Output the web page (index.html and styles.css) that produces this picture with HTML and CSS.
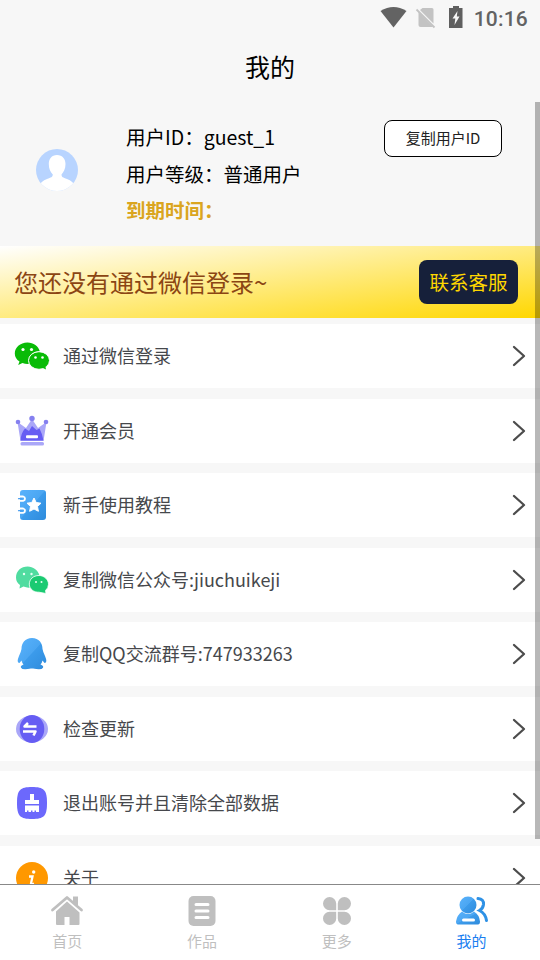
FILE: index.html
```html
<!DOCTYPE html>
<html lang="zh-CN">
<head>
<meta charset="utf-8">
<title>我的</title>
<link rel="stylesheet" href="styles.css">
</head>
<body>
<div class="app">
  <header class="status">
    <svg class="status-icons" width="90" height="28" viewBox="0 0 90 28">
      <path d="M.5 11Q13.500 3 26.500 11L13.500 27.500Z" fill="#636363"/>
      <path d="M42.500 8H52Q53.500 8 53.500 9.500V23.500L40 10Z M38.500 12L53 27H40.500Q38.500 27 38.500 25Z" fill="#c3c3c3"/>
      <path d="M36.500 9.500L54.500 27.500" stroke="#c3c3c3" stroke-width="1.800"/>
      <path d="M73 6H79V8H82.500V28H69V8H73Z" fill="#5f5f5f"/>
      <path d="M77.500 11L72.500 18.500H75.300L74.500 25L79.500 16.500H76.800Z" fill="#f7f7f7"/>
    </svg>
    <span class="clock">10:16</span>
  </header>
  <h1 class="title">我的</h1>
  <main class="content">
    <section class="profile">
      <svg class="avatar" width="42" height="42" viewBox="0 0 42 42">
        <defs><clipPath id="face"><circle cx="21" cy="21" r="21"/></clipPath></defs>
        <g clip-path="url(#face)"><path fill="#b8d4ff" d="M0 0H42V42H0Z"/><path fill="#fff" d="M21 6C26.500 6 29.500 10 29.500 15C29.500 20 27.500 23 25.500 25.500C25.500 28 27 28.500 31 30C35 31.500 38 34 39 37V42H3V37C4 34 7 31.500 11 30C15 28.500 16.800 28 16.800 25.500C14.500 23 12.800 20 12.800 15C12.800 10 15.500 6 21 6Z"/></g>
      </svg>
      <div class="facts">
        <p>用户ID：guest_1</p>
        <p>用户等级：普通用户</p>
        <p class="expiry">到期时间：</p>
      </div>
      <button class="copy">复制用户ID</button>
    </section>
    <section class="banner">
      <span>您还没有通过微信登录~</span>
      <button class="service">联系客服</button>
    </section>
    <nav class="menu">
      <a class="row">
        <svg class="icon" viewBox="0 0 36 36"><path fill="#09bb07" d="M13.500 4.500C6 4.500.8 9.500.8 15.500C.8 19 2.500 21.500 5.500 23.500L4.200 27L8.500 25Q12 26.300 15.500 25.800C13 19 18 13.300 25.800 13.300C24.500 8 19.500 4.500 13.500 4.500Z"/><ellipse cx="25" cy="22.500" rx="10.500" ry="8.800" fill="#09bb07" stroke="#fff" stroke-width="1"/><path fill="#09bb07" d="M27 29L32 31.500L31 27Z"/><g fill="#fff"><circle cx="9" cy="11.500" r="1.600"/><circle cx="17.500" cy="11.500" r="1.600"/><circle cx="21.500" cy="19.500" r="1.300"/><circle cx="28.500" cy="19.500" r="1.300"/></g></svg>
        <span class="label">通过微信登录</span>
        <svg class="arrow" viewBox="0 0 14 22"><path d="M2 2L12 11L2 20"/></svg>
      </a>
      <a class="row">
        <svg class="icon" viewBox="0 0 36 36"><path fill="#aaa7f8" d="M3.500 9L12 15L18 6L24 15L32.500 9L29.500 28H6.500Z"/><g fill="#8580ef"><circle cx="4" cy="9" r="2.300"/><circle cx="18" cy="5.500" r="2.700"/><circle cx="32" cy="9" r="2.300"/></g><path fill="#665df3" d="M11 15.500L15 18L18 13L22.500 17L25.500 15.500Q28 20 29.500 27.500H6.500Q7 20 11 15.500Z"/><rect x="12" y="22.300" width="12" height="3" rx="1" fill="#fff"/><rect x="6.500" y="29" width="23.500" height="3.500" rx="1.500" fill="#aaa7f8"/></svg>
        <span class="label">开通会员</span>
        <svg class="arrow" viewBox="0 0 14 22"><path d="M2 2L12 11L2 20"/></svg>
      </a>
      <a class="row">
        <svg class="icon" viewBox="0 0 36 36"><defs><linearGradient id="blue" x2="1" y2="1"><stop stop-color="#59b2fc"/><stop offset=".48" stop-color="#4ba6f2"/><stop offset=".5" stop-color="#3c9beb"/><stop offset="1" stop-color="#2e8bdc"/></linearGradient></defs><rect x="6" y="3" width="26" height="30" rx="3" fill="url(#blue)"/><g fill="none" stroke-linecap="round"><path stroke="#fff" stroke-width="1.800" d="M6 9.500H9.200Q11 10 11 11.700T9.200 13.800H6M6 21.500H9.200Q11 22 11 23.700T9.200 25.800H6"/><path stroke="#4a9ff0" stroke-width="1.200" d="M4.500 11.700H8M4.500 23.700H8"/></g><path fill="#fff" stroke="#fff" stroke-linejoin="round" d="M20 11L22.200 15.500L27 16.200L23.500 19.500L24.400 24.300L20 22L15.600 24.300L16.500 19.500L13 16.200L17.800 15.500Z"/></svg>
        <span class="label">新手使用教程</span>
        <svg class="arrow" viewBox="0 0 14 22"><path d="M2 2L12 11L2 20"/></svg>
      </a>
      <a class="row">
        <svg class="icon" viewBox="0 0 36 36"><path fill="#50dca0" d="M13.700 4.500C7 4.500 2 9 2 15.500Q2 20 6 23L5.500 26.500L9.500 24.500Q13 26 16 25.500C14 19 18 14 25.500 13.500C24 8 19 4.500 13.700 4.500Z"/><path fill="#1bca72" stroke="#fff" stroke-width=".8" d="M25 13.500C19 13.500 15.300 17.500 15.300 22.200C15.300 27 20 30.500 25 30.200L32 31.500L31.500 28.500Q34.500 26 34.500 22.200C34.500 17.500 30 13.500 25 13.500Z"/><g fill="#e8fff3"><circle cx="10" cy="12" r="1.200"/><circle cx="17.500" cy="12" r="1.200"/><circle cx="22" cy="20" r="1"/><circle cx="27.500" cy="20" r="1"/></g></svg>
        <span class="label">复制微信公众号:jiuchuikeji</span>
        <svg class="arrow" viewBox="0 0 14 22"><path d="M2 2L12 11L2 20"/></svg>
      </a>
      <a class="row">
        <svg class="icon" viewBox="0 0 36 36"><path fill="url(#blue)" d="M18 2C11 2 7.500 7 7.500 13Q7 16 5 20Q2 27 5.500 27L7.500 24.500Q8 27 9.500 28.500Q6 30 7 31.700Q8.500 34.500 17 32.500H19Q27.500 34.500 29 31.700Q30 30 26.500 28.500Q28 27 28.500 24.500L30.500 27Q34 27 31 20Q29 16 28.500 13C28.500 7 25 2 18 2Z"/></svg>
        <span class="label">复制QQ交流群号:747933263</span>
        <svg class="arrow" viewBox="0 0 14 22"><path d="M2 2L12 11L2 20"/></svg>
      </a>
      <a class="row">
        <svg class="icon" viewBox="0 0 36 36"><ellipse cx="18" cy="18" rx="16" ry="13.500" fill="#aaa7f8"/><ellipse cx="18" cy="18" rx="12.300" ry="14" fill="#665df3"/><path fill="none" stroke="#fff" stroke-width="2.500" stroke-linejoin="round" d="M22.500 15.500H10.500L14 12M9 20.500H21.500L19.500 24.500"/></svg>
        <span class="label">检查更新</span>
        <svg class="arrow" viewBox="0 0 14 22"><path d="M2 2L12 11L2 20"/></svg>
      </a>
      <a class="row">
        <svg class="icon" viewBox="0 0 36 36"><path fill="#6c68fc" d="M18 2C30 2 33 5 33 18S30 34 18 34S3 31 3 18S6 2 18 2Z"/><path fill="#fff" d="M16 9H20V15H25V19H11V15H16ZM11 20.500H25V27H22V25.500H20.500V27H18.500V25.500H17V27H14.500V25.500H13V27H11Z"/></svg>
        <span class="label">退出账号并且清除全部数据</span>
        <svg class="arrow" viewBox="0 0 14 22"><path d="M2 2L12 11L2 20"/></svg>
      </a>
      <a class="row">
        <svg class="icon" viewBox="0 0 36 36"><circle cx="18" cy="18" r="16" fill="#ff9800"/><circle cx="19.700" cy="12" r="1.700" fill="#fff"/><path fill="none" stroke="#fff" stroke-width="2.300" d="M15 16.500H18.500L17 23.500Q17 25 20 23.500"/></svg>
        <span class="label">关于</span>
        <svg class="arrow" viewBox="0 0 14 22"><path d="M2 2L12 11L2 20"/></svg>
      </a>
    </nav>
    <div class="scrollbar"></div>
  </main>
  <nav class="tabs">
    <a class="tab">
      <svg viewBox="0 0 36 36"><path fill="none" stroke="#bfbfbf" stroke-width="2.800" stroke-linecap="round" stroke-linejoin="round" d="M3.500 17L18 4.500L32.500 17"/><path fill="#bfbfbf" d="M24 3.500H29V14L24 9.500ZM18 8.500L30.500 19.500V31Q30.500 32 29.500 32H20.500V24H15.500V32H8Q7 32 7 31V18.500Z"/></svg>
      <span>首页</span>
    </a>
    <a class="tab">
      <svg viewBox="0 0 36 36"><rect x="4.500" y="3" width="27" height="30" rx="5" fill="#bfbfbf"/><path stroke="#fff" stroke-width="3" stroke-linecap="round" d="M12 11.500H24M12 18H24M12 24.500H24"/></svg>
      <span>作品</span>
    </a>
    <a class="tab">
      <svg viewBox="0 0 36 36"><path fill="#bfbfbf" d="M17.200 17.200H10.600A6.600 6.600 0 1 1 17.200 10.600ZM18.800 17.200V10.600A6.600 6.600 0 1 1 25.400 17.200ZM17.200 18.800V25.400A6.600 6.600 0 1 1 10.600 18.800ZM18.800 18.800H25.400A6.600 6.600 0 1 1 18.800 25.400Z"/></svg>
      <span>更多</span>
    </a>
    <a class="tab active">
      <svg viewBox="0 0 36 36"><path fill="none" stroke="#2e91e5" stroke-width="3" stroke-linecap="round" d="M24 5.500Q30 6 29.500 11.500Q29 15.500 25.500 17.500Q31.500 20.500 32.500 27.500"/><circle cx="14" cy="12" r="8.500" fill="url(#blue)"/><path fill="url(#blue)" d="M8 18.500Q14 23.500 20 18.500Q25.500 22 26 28.500Q26 31.500 24 31.500H4Q2 31.500 2 28.500Q3 22 8 18.500Z"/><rect x="8" y="25.500" width="13" height="3" rx="1.500" fill="#fff"/></svg>
      <span>我的</span>
    </a>
  </nav>
</div>
</body>
</html>
```
FILE: styles.css
```css
* { box-sizing: border-box; }
body, h1, p { margin: 0; }
body {
  font-family: "Noto Sans CJK SC", sans-serif;
  font-weight: 400;
  color: #000;
  background: #f7f7f7;
}
button { font: inherit; padding: 0 0 2px; }
.app { display: flex; flex-direction: column; height: 960px; overflow: hidden; }
.status {
  height: 36px;
  flex: none;
  display: flex;
  justify-content: flex-end;
  gap: 4px;
  padding-right: 12px;
}
.status-icons { overflow: visible; }
.clock { font: 500 21px/38px Roboto, sans-serif; color: #636363; letter-spacing: .2px; }
.title { height: 66px; flex: none; font-size: 25px; font-weight: 400; line-height: 60px; text-align: center; }
.content { position: relative; flex: 1; min-height: 0; overflow: hidden; }
.profile { height: 144px; display: flex; align-items: flex-start; padding: 17px 38px 0 36px; }
.avatar { margin-top: 30px; }
.facts { flex: 1; margin-left: 48px; font-size: 19.5px; line-height: 36.5px; white-space: nowrap; }
.expiry { color: #daa520; font-weight: 700; }
.copy { width: 118px; height: 37px; margin-top: 1px; border: 1px solid #000; border-radius: 8px; background: #fff; font-size: 15px; color: #222; }
.banner {
  height: 72px;
  display: flex;
  align-items: center;
  justify-content: space-between;
  padding: 0 22px 0 14px;
  background: linear-gradient(to bottom right, #fff, #ffd700);
  color: #8b4513;
  font-size: 24px;
}
.banner span { padding-bottom: 2px; }
.service { width: 99px; height: 44px; border: 0; border-radius: 8px; background: #16203a; color: #ffd700; font-size: 19.5px; }
.menu { display: flex; flex-direction: column; gap: 10.5px; padding-top: 6px; }
.row { height: 64px; flex: none; display: flex; align-items: center; padding: 0 14px; background: #fff; }
.icon { width: 36px; height: 36px; flex: none; }
.label { flex: 1; margin-left: 13px; padding-bottom: 1.5px; font-size: 18px; color: #46484c; }
.arrow { width: 14px; height: 22px; fill: none; stroke: #4c4c4c; stroke-width: 2.300; stroke-linecap: round; stroke-linejoin: round; }
.scrollbar { position: absolute; top: 0; right: 0; width: 5px; height: 737px; background: rgba(0, 0, 0, .28); }
.tabs { height: 76px; flex: none; display: flex; padding-right: 1px; border-top: 1px solid #888; background: #fff; }
.tab { flex: 1; display: flex; flex-direction: column; align-items: center; padding-top: 8px; font-size: 15px; line-height: 24px; color: #bfbfbf; }
.tab svg { width: 36px; height: 36px; }
.tab.active { color: #1a7ef0; }
```
